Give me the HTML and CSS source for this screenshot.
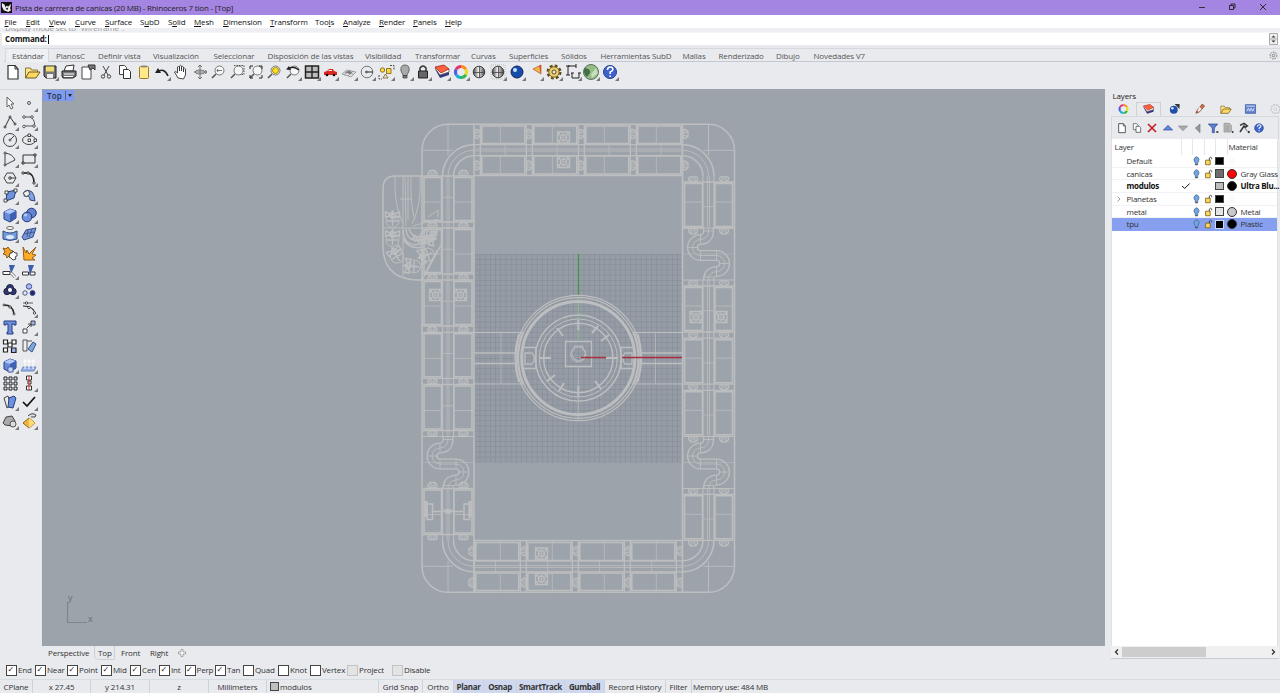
FILE: index.html
```html
<!DOCTYPE html>
<html lang="en">
<head>
<meta charset="utf-8">
<title>Rhinoceros 7</title>
<link rel="stylesheet" href="styles.css">
</head>
<body>
<div class="app">
<header class="titlebar">
  <svg class="logo" viewBox="0 0 12 12"><path d="M0 0h12v12H0z" fill="#111"/><path d="M1 1l3 2 1 3 1-2 2 1 3-3-1 5 1 2-3 2-5-2-2-4z" fill="#eee"/><path d="M5 7l3-1-1 3z" fill="#222"/></svg>
  <span class="title">Pista de carrrera de canicas (20 MB) - Rhinoceros 7 tion - [Top]</span>
  <svg class="winbtns" viewBox="0 0 80 15" fill="none" stroke="#222" stroke-width=".9"><path d="M4 7.500h6M65 4l6 6m0-6l-6 6"/><path d="M34.500 5.500h4v4h-4zM36 5.500V4h4v4h-1.500"/></svg>
</header>
<nav class="menu"><span><u>F</u>ile</span><span><u>E</u>dit</span><span><u>V</u>iew</span><span><u>C</u>urve</span><span><u>S</u>urface</span><span>S<u>u</u>bD</span><span>S<u>o</u>lid</span><span><u>M</u>esh</span><span><u>D</u>imension</span><span><u>T</u>ransform</span><span>Too<u>l</u>s</span><span><u>A</u>nalyze</span><span><u>R</u>ender</span><span><u>P</u>anels</span><span><u>H</u>elp</span></nav>
<div class="history"><span>Display mode set to "Wireframe".</span></div>
<div class="command"><b>Command:</b><i class="caret"></i><svg class="spin" viewBox="0 0 9 12"><path d="M.5.500h8v11h-8zM.500 6h8" fill="#eee" stroke="#aaa"/><path d="M2.500 4.500l2-2 2 2zM2.500 7.500l2 2 2-2z" fill="#333"/></svg></div>
<nav class="tabs"><span class="on">Estándar</span><span>PlanosC</span><span>Definir vista</span><span>Visualización</span><span>Seleccionar</span><span>Disposición de las vistas</span><span>Visibilidad</span><span>Transformar</span><span>Curvas</span><span>Superficies</span><span>Sólidos</span><span>Herramientas SubD</span><span>Mallas</span><span>Renderizado</span><span>Dibujo</span><span>Novedades V7</span><svg class="gear" viewBox="0 0 10 10" fill="none" stroke="#777"><circle cx="5" cy="5" r="3.800" stroke-dasharray="2 .8"/><circle cx="5" cy="5" r="1.500"/></svg></nav>

<div class="toolbar">
  <svg viewBox="0 0 18 18"><use href="#page"/></svg>
  <svg viewBox="0 0 18 18"><use href="#folder"/></svg>
  <svg viewBox="0 0 18 18"><path d="M3 3h12v12H5l-2-2z" fill="#777" stroke="#222"/><path d="M5 3.500h8v5H5z" fill="#f0dc70"/><path d="M6 11h6v4H6z" fill="#eee"/><use href="#tri"/></svg>
  <svg viewBox="0 0 18 18"><path d="M6 3l8-1-1 6H4z" fill="#fff" stroke="#333"/><path d="M2 8h14v5l-3 2H3l-1-2z" fill="#777" stroke="#222"/><path d="M4 11h10M4 13.500h9" stroke="#fff"/></svg>
  <svg viewBox="0 0 18 18"><path d="M3 4h9v12H3z" fill="#fff" stroke="#444"/><path d="M9 2h7v5l-2-2-3 2z" fill="#777" stroke="#333"/></svg>
  <svg viewBox="0 0 18 18" fill="none" stroke="#444"><path d="M6 3l5 9M12 3l-5 9"/><circle cx="6" cy="13.500" r="1.700"/><circle cx="12" cy="13.500" r="1.700"/></svg>
  <svg viewBox="0 0 18 18"><use href="#copy"/></svg>
  <svg viewBox="0 0 18 18"><rect x="4.500" y="3.500" width="9" height="12" rx="1" fill="#ffe98a" stroke="#9a7b22"/><path d="M6.500 2.500h5v2h-5z" fill="#888"/></svg>
  <svg viewBox="0 0 18 18"><path d="M4 9q7-5 11 4" fill="none" stroke="#222" stroke-width="1.600"/><path d="M2 10l3-5 3 5z" fill="#222"/><use href="#tri"/></svg>
  <svg viewBox="0 0 18 18"><path d="M6 15L2.500 9q1-1.500 3 1V4q1-1 2 0v4-5q1-1.500 2 0v5-4q1-1.500 2 0v5-3q1-1.500 2 0v6l-2 4z" fill="#fff" stroke="#333" stroke-width=".9"/></svg>
  <svg viewBox="0 0 18 18" fill="none" stroke="#666" stroke-width=".9"><path d="M9 2v14M3 9h13M7 4l2-2 2 2M7 14l2 2 2-2M14 7l2 2-2 2"/><ellipse cx="9" cy="9" rx="5" ry="2"/></svg>
  <svg viewBox="0 0 18 18"><use href="#lens"/><path d="M8 7.500h5M9 6l-1 1.500L9 9" stroke="#555" fill="none" stroke-width=".8"/></svg>
  <svg viewBox="0 0 18 18"><use href="#lens"/><path d="M6 2.500h10v9h-4" fill="none" stroke="#555" stroke-dasharray="1.500 1"/></svg>
  <svg viewBox="0 0 18 18"><use href="#lens"/><path d="M3 6V3h3M12 3h3v3M15 12v3h-3M3 12v3h3" fill="none" stroke="#222"/></svg>
  <svg viewBox="0 0 18 18"><use href="#lens"/><circle cx="10.500" cy="7.500" r="3" fill="#ffe020" stroke="#a78100"/></svg>
  <svg viewBox="0 0 18 18"><use href="#lens"/><path d="M4 6q5-4 11 1" fill="none" stroke="#222" stroke-width="1.500"/><path d="M2 6.500l3-3.500 2 4z" fill="#222"/><use href="#tri"/></svg>
  <svg viewBox="0 0 18 18"><path d="M2.500 3h13v12h-13z" fill="#bbb" stroke="#222" stroke-width="1.500"/><path d="M9 3v12M2 9h14" stroke="#222" stroke-width="1.400"/><use href="#tri"/></svg>
  <svg viewBox="0 0 18 18"><path d="M3 9l3-1 2-2h4l1 2 3 1v3H3z" fill="#db2922"/><path d="M8 7h3v1H7z" fill="#eee"/><circle cx="6" cy="12" r="1.300"/><circle cx="13" cy="12" r="1.300"/><use href="#tri"/></svg>
  <svg viewBox="0 0 18 18"><path d="M2 11l5-4 9 2-5 5zM5 9l8 2M4 12l6-5M8 13l5-5" fill="#ddd" stroke="#888" stroke-width=".7"/><path d="M5 9l5 2 2-2-3-1z" fill="#777"/><use href="#tri"/></svg>
  <svg viewBox="0 0 18 18" fill="none" stroke="#777"><circle cx="9" cy="9" r="5.800"/><path d="M9 9h6" stroke="#222"/><circle cx="8.500" cy="9" r="1" fill="#222"/><use href="#tri"/></svg>
  <svg viewBox="0 0 18 18" stroke="#735c12" stroke-width=".8" fill="#ffd83b"><circle cx="5.500" cy="7" r="2.200"/><path d="M9.500 5.500h4.500v5H9.500z"/><path d="M6 15l2.500-4 2.500 4z" fill="#eee"/><path d="M13 2.500h4v4M2 12v4h3" fill="none" stroke="#222" stroke-dasharray="2 1"/><use href="#tri"/></svg>
  <svg viewBox="0 0 18 18"><path d="M7 12L5 8q-1-6 4-6t4 6l-2 4v3H7z" fill="#aaa" stroke="#666"/><path d="M7 12.500h4M7 14h4" stroke="#444"/><use href="#tri"/></svg>
  <svg viewBox="0 0 18 18"><path d="M6 9V5q3-4 6 0v4" fill="none" stroke="#333" stroke-width="1.500"/><path d="M4.500 8h9v7h-9z" fill="#666" stroke="#222"/><use href="#tri"/></svg>
  <svg viewBox="0 0 18 18"><use href="#layers"/><use href="#tri"/></svg>
  <svg viewBox="0 0 18 18"><use href="#wheel"/><use href="#tri"/></svg>
  <svg viewBox="0 0 18 18"><use href="#sphere"/></svg>
  <svg viewBox="0 0 18 18"><path d="M2 2h14v14H2z" fill="none" stroke="#bbb" stroke-dasharray="1 1"/><use href="#sphere"/><use href="#tri"/></svg>
  <svg viewBox="0 0 18 18"><circle cx="9" cy="9" r="6" fill="#174ba8" stroke="#102560"/><circle cx="7" cy="7" r="2" fill="#c4e2ff"/><use href="#tri"/></svg>
  <svg viewBox="0 0 18 18"><path d="M7 6l8-4v9z" fill="#f6b44c" stroke="#a75520" stroke-width=".7"/><path d="M13 3l2-1v9z" fill="#d65424"/><use href="#tri"/></svg>
  <svg viewBox="0 0 18 18"><circle cx="9" cy="9" r="6" fill="none" stroke="#604d16" stroke-width="3" stroke-dasharray="2.700 2"/><circle cx="9" cy="9" r="5.200" fill="#e8cd73" stroke="#80691f"/><circle cx="9" cy="9" r="2" fill="#eee" stroke="#604d16"/><use href="#tri"/></svg>
  <svg viewBox="0 0 18 18" fill="none" stroke="#222"><path d="M4 12V3h8M2 3h4M2 12h4M12 1v4M8 10v5h7v-5M7 10h3M14 10h3"/><use href="#tri"/></svg>
  <svg viewBox="0 0 18 18"><circle cx="9" cy="9" r="7.500" fill="#93bd83" stroke="#5f6e62"/><path d="M3 5q6 1 5 5l-3 4Q0 9 3 5" fill="#416d47"/><path d="M9 11l5-6 2 5-6 5z" fill="#c4dfb9"/><use href="#tri"/></svg>
  <svg viewBox="0 0 18 18"><use href="#help"/><use href="#tri"/></svg>
</div>

<main class="work">
<aside class="tools">
  <svg viewBox="0 0 18 18"><path d="M6 3v10l2-2 2 4 2-1-2-4h3z" fill="#fff" stroke="#555" stroke-width=".9"/></svg>
  <svg viewBox="0 0 18 18"><circle cx="9" cy="9" r="1.500" fill="none" stroke="#555"/><use href="#tri"/></svg>
  <svg viewBox="0 0 18 18" fill="none" stroke="#333"><path d="M4 14L9 4l5 7"/><g fill="#fff"><circle cx="4" cy="14" r="1"/><circle cx="9" cy="4" r="1"/><circle cx="14" cy="11" r="1"/></g><use href="#tri"/></svg>
  <svg viewBox="0 0 18 18" fill="none" stroke="#444" stroke-width=".9"><path d="M4 4h7q5 5 3 9H4"/><g fill="#fff"><circle cx="4" cy="4" r="1.300"/><circle cx="12" cy="4" r="1.300"/><circle cx="4" cy="13.500" r="1.300"/><circle cx="14" cy="13" r="1.300"/></g><use href="#tri"/></svg>
  <svg viewBox="0 0 18 18" fill="none" stroke="#444"><circle cx="9" cy="9" r="6.500"/><path d="M9 9l4-4"/><circle cx="9" cy="9" r="1" fill="#fff"/><use href="#tri"/></svg>
  <svg viewBox="0 0 18 18" fill="none" stroke="#444"><ellipse cx="9" cy="9" rx="6.500" ry="4.500"/><path d="M8 8h2.500v2.500H8zM14 8h2.500v2.500H14zM8 3h2.500v2.500H8z" fill="#fff" stroke="#222" stroke-width=".8"/><use href="#tri"/></svg>
  <svg viewBox="0 0 18 18" fill="none" stroke="#444"><path d="M4 3v12l10-5Q12 4 4 3z"/><circle cx="4" cy="3" r="1" fill="#fff"/><circle cx="4" cy="15" r="1" fill="#fff"/><use href="#tri"/></svg>
  <svg viewBox="0 0 18 18" fill="none" stroke="#333"><path d="M3 5h12v8H3z"/><path d="M2 12h2v2H2zM14 4h2v2h-2z" fill="#fff"/><use href="#tri"/></svg>
  <svg viewBox="0 0 18 18" fill="none" stroke="#444"><path d="M6 4h6l3 5-3 5H6L3 9z"/><path d="M9 9h6"/><circle cx="9" cy="9" r="1.300"/><use href="#tri"/></svg>
  <svg viewBox="0 0 18 18" fill="none" stroke="#222"><path d="M3 4h5q6 1 6 10" stroke-width="1.500"/><path d="M2 3h2v2H2zM7 3h2v2H7zM13 13h2v2h-2z" fill="#fff" stroke-width=".8"/><use href="#tri"/></svg>
  <svg viewBox="0 0 18 18"><path d="M6 5l9-2-2 8-8 3z" fill="#6f91da" stroke="#24407d"/><path d="M4 4h3v3H4zM13 2h3v3h-3zM3 12h3v3H3z" fill="#fff" stroke="#222" stroke-width=".8"/><use href="#tri"/></svg>
  <svg viewBox="0 0 18 18"><path d="M5 4q9-3 10 10l-5-1q0-5-6-4z" fill="#86a2e6" stroke="#354675"/><path d="M3 6l5-3 2 4-4 3z" fill="#eee" stroke="#333" stroke-width=".8"/><use href="#tri"/></svg>
  <svg viewBox="0 0 18 18"><use href="#box"/><use href="#tri"/></svg>
  <svg viewBox="0 0 18 18"><circle cx="11.500" cy="7" r="4.800" fill="#6482cf" stroke="#253a79"/><circle cx="7" cy="11" r="4.800" fill="#6f90de" stroke="#253a79"/><circle cx="5.500" cy="9" r="1.600" fill="#b8c9fa"/><use href="#tri"/></svg>
  <svg viewBox="0 0 18 18"><ellipse cx="9" cy="3" rx="3.500" ry="1.500" fill="#fff" stroke="#666"/><path d="M2 6v8q7 3 14 0V6q-7 4-14 0z" fill="#729bd9" stroke="#334b85"/><ellipse cx="9" cy="12" rx="4" ry="2" fill="#e0e8f9"/><use href="#tri"/></svg>
  <svg viewBox="0 0 18 18"><path d="M2 12L6 5l10-2-3 9-9 3z" fill="#7897d8" stroke="#334b85"/><path d="M4 9l10-2M8 5l-1 7M12 4l-3 8" stroke="#334b85" stroke-width=".8"/><use href="#tri"/></svg>
  <svg viewBox="0 0 18 18"><path d="M2 4l3 1 2-2 2 3 3 1-2 3 1 3-3-1-2 2-1-3-3-1 2-2z" fill="#f4a129" stroke="#8b5a0f"/><path d="M9 9h2l1-2 2 2h2v3l-2 1 1 2-3 1-2-2-2-1z" fill="#fff" stroke="#444"/></svg>
  <svg viewBox="0 0 18 18"><path d="M3 3l3 6 1-3 2 4 7-7-4 7 4 1-4 3 3 2H4z" fill="#ffad28" stroke="#985d13"/></svg>
  <svg viewBox="0 0 18 18"><path d="M2 9.500h7v3H2z" fill="#fff" stroke="#333"/><path d="M8 3h6l-4 9z" fill="#3c5eac"/><path d="M10 11l4 4" stroke="#777" stroke-width="3"/><path d="M10 11l4 4" stroke="#fff" stroke-width="1.500"/><use href="#tri"/></svg>
  <svg viewBox="0 0 18 18"><path d="M2.500 10h6v3h-6zM10 10h5v3h-5z" fill="#fff" stroke="#333"/><path d="M8 3h6L10 13z" fill="#3c5eac"/></svg>
  <svg viewBox="0 0 18 18" fill="#303870" stroke="#202040"><circle cx="6" cy="10.500" r="3.200"/><circle cx="12" cy="10.500" r="3.200"/><circle cx="9" cy="7" r="3.500"/><circle cx="9" cy="9" r="2" fill="#fff" stroke="none"/><use href="#tri"/></svg>
  <svg viewBox="0 0 18 18" stroke="#445090"><circle cx="9" cy="5.500" r="2.700" fill="#a9b7f6"/><circle cx="5" cy="12" r="2.200" fill="#eee"/><circle cx="12.500" cy="12" r="2.500" fill="#1c286e"/></svg>
  <svg viewBox="0 0 18 18" fill="none" stroke="#222" stroke-width="1.300"><path d="M3 5q9 0 10 9"/><g fill="#fff" stroke-width=".8"><circle cx="3" cy="5" r="1"/><circle cx="9" cy="7" r="1.200"/><circle cx="13" cy="14" r="1"/></g></svg>
  <svg viewBox="0 0 18 18" fill="none" stroke="#222" stroke-width="1.200"><path d="M3 6q11 0 12 8"/><path d="M3 3h10" stroke-width=".7"/><g fill="#fff" stroke-width=".8"><circle cx="6.500" cy="3" r="1.200"/><circle cx="9" cy="7.500" r="1.200"/><circle cx="14.500" cy="13" r="1.200"/></g><use href="#tri"/></svg>
  <svg viewBox="0 0 18 18"><path d="M3 3h12v4h-2V6h-2v8h1v2H6v-2h1V6H5v1H3z" fill="#718edc" stroke="#243d80"/></svg>
  <svg viewBox="0 0 18 18" fill="#fff" stroke="#444"><path d="M3 11h4v4H3z"/><path d="M11 3h4v4h-4z" fill="#9fb4ee"/><path d="M7 10l4-4M8 6h3v3" fill="none"/><use href="#tri"/></svg>
  <svg viewBox="0 0 18 18" fill="#fff" stroke="#222" stroke-width="1.200"><path d="M2.500 3h4v4h-4zM11 3h4v4h-4zM7 6h4v4H7zM2.500 11h4v4h-4z"/><path d="M10.500 11h4.500v4.500h-4.500z" fill="#9fb4ee"/></svg>
  <svg viewBox="0 0 18 18"><path d="M3 3h4v11H3z" fill="#eee" stroke="#555"/><path d="M8 12l5-7 3 2-4 8z" fill="#82a4df" stroke="#36538b"/><path d="M7 4h5" stroke="#555"/></svg>
  <svg viewBox="0 0 18 18"><use href="#box"/><path d="M7 11h5v5H7z" fill="#c5d4fa" stroke="#465f9c"/><use href="#tri"/></svg>
  <svg viewBox="0 0 18 18"><path d="M3 11h13l-2 4H1z" fill="#94b0ed" stroke="#7089bb"/><path d="M5 13V4M9 13V4M13 13V4M3.500 6L5 3.500 6.500 6M7.500 6L9 3.500l1.500 2.500M11.500 6L13 3.500 14.500 6" stroke="#fff" fill="none"/><use href="#tri"/></svg>
  <svg viewBox="0 0 18 18" fill="#dce4fb" stroke="#222"><path d="M3 3h3v3H3zM8 3h3v3H8zM13 3h3v3h-3zM3 8h3v3H3zM8 8h3v3H8zM13 8h3v3h-3zM3 13h3v3H3zM8 13h3v3H8zM13 13h3v3h-3z"/></svg>
  <svg viewBox="0 0 18 18" fill="#fff" stroke="#333"><path d="M6.500 2h5v4h-5zM8 7h3v3H8zM6.500 12h5v4h-5z"/><path d="M9 2v14" stroke="#d33"/><use href="#tri"/></svg>
  <svg viewBox="0 0 18 18"><path d="M3 5l4-2 3 9-4 3z" fill="#eee" stroke="#444"/><path d="M8 5l5-2 2 2-3 10-5-1z" fill="#6e91dc" stroke="#243d80"/><use href="#tri"/></svg>
  <svg viewBox="0 0 18 18"><path d="M3 9l4 4 8-9" fill="none" stroke="#111" stroke-width="1.700"/><use href="#tri"/></svg>
  <svg viewBox="0 0 18 18"><path d="M2 11l3-6 6-1 3 5-2 5-8-1z" fill="#aaa" stroke="#444"/><circle cx="12" cy="12" r="3" fill="#ddd" stroke="#555"/><use href="#tri"/></svg>
  <svg viewBox="0 0 18 18"><path d="M3 11l6-5 6 5-6 5z" fill="#f2b53b" stroke="#8b671c"/><path d="M9 6v10l6-5z" fill="#ffda76"/><path d="M8 4q4-4 8-1l-1 2h-4" fill="#ddd" stroke="#333" stroke-width=".9"/><use href="#tri"/></svg>
</aside>

<section class="viewport">
<div class="vplabel">Top<i></i></div>
<svg class="scene" viewBox="42 89 1063 557">
  <defs>
    <pattern id="minor" x="474.300" y="253.900" width="5.200" height="5.200" patternUnits="userSpaceOnUse"><path d="M0 0V5.200M0 0H5.200" stroke="#7f8790" stroke-width=".9"/></pattern>
    <g id="clip"><path d="M-4.500 1.500q0-3 2-3v-1h5v1q2 0 2 3l-1 1h-7z" stroke-width="1.300"/><path d="M-3 .5h6M-1.500-2v4M1.500-2v4" stroke-width=".7"/></g>
    <g id="mod"><path d="M2 1.500h17.500v43H2zM32 1.500h18v43H32z" stroke-width="1.600"/><path d="M20.600 0v52M31.600 0v52" stroke-width="1.100"/><path d="M25 0v52M27 0v52M0 26h20M32 26h20M20 21.300h11" stroke-width=".8"/><path d="M0 0h52M0 46h52" stroke-width="1.300"/></g>
    <g id="snake"><path d="M26 0v3q0 8-8 8.500a8 8 0 0 0 0 16h16a8 8 0 0 1 0 16q-8 .5-8 8.500" stroke-width="11.200"/><path d="M26-1v4q0 8-8 8.500a8 8 0 0 0 0 16h16a8 8 0 0 1 0 16q-8 .5-8 9.500" stroke="#9ca3ab" stroke-width="8.400"/><path d="M26 0v3q0 8-8 8.500a8 8 0 0 0 0 16h16a8 8 0 0 1 0 16q-8 .5-8 8.500M6 19.500h9M18 7v9M18 23v10M34 22v10M37 35.500h9M34 39v9M21 3h10M21 49h10" stroke-width=".9"/><path d="M0 0h52M0 52h52" stroke-width="1.200"/><path d="M0 26h52" stroke-width=".5"/></g>
    <g id="target"><path d="M-6-5.500h12v11H-6zM-6-3h2v-2.500M6-3H4v-2.500M-6 3h2v2.500M6 3H4v2.500" stroke-width="1.300"/><circle r="3" stroke-width="1.400"/><path d="M-4 0h8M0-4v8" stroke-width=".7"/></g>
    <g id="corner"><path d="M0 52V26A26 26 0 0 1 26 0H52" stroke-width="1.500"/><path d="M20.500 52A31.500 31.500 0 0 1 52 20.500M31.500 52A20.500 20.500 0 0 1 52 31.500" stroke-width="1.600"/><path d="M26 52A26 26 0 0 1 52 26M26 0v31M0 26h31" stroke-width=".9"/></g>
    <g id="fish"><circle cy="4" r="6.500"/><path d="M-7-5l5 2 2-3 2 3 5-2v5l-4-1-3 3-3-3-4 1zM-4-2l8 3M0-5v14M-6 4H6" stroke-width="1.400"/></g>
  </defs>
  <rect x="474" y="254" width="208.500" height="208.500" fill="#959ca5"/>
  <rect x="474" y="254" width="208.500" height="208.500" fill="url(#minor)"/>
  <path d="M578.500 254v41" stroke="#3c993f" stroke-width="1.200"/><path d="M578.500 296v44" stroke="#82bd82"/>
  <g class="wire">
    <use href="#corner" x="422" y="124.300"/>
    <use href="#corner" transform="translate(734.500 124.300) scale(-1 1)"/>
    <use href="#corner" transform="translate(422 592.300) scale(1 -1)"/>
    <use href="#corner" transform="translate(734.500 592.300) scale(-1 -1)"/>
    <path d="M474 124.300H683M422 176v364M734.500 176v364M474 592.300H683" stroke-width="1.500"/>
    <path d="M474 175.500H683M474 540.500H683M474 124v468M682.500 124v468" stroke-width="1.600"/>
    <g><use href="#mod" x="422" y="176"/><use href="#mod" x="422" y="228"/><use href="#mod" x="422" y="280"/><use href="#mod" x="422" y="332.300"/><use href="#mod" x="422" y="384.500"/><use href="#snake" x="422" y="436.500"/><use href="#mod" x="422" y="488.500"/></g>
    <g><use href="#mod" transform="translate(734.500 228) rotate(180)"/><use href="#snake" x="682.500" y="228"/><use href="#mod" transform="translate(734.500 332) rotate(180)"/><use href="#mod" transform="translate(734.500 384.200) rotate(180)"/><use href="#mod" transform="translate(734.500 436.300) rotate(180)"/><use href="#snake" x="682.500" y="436.500"/><use href="#mod" transform="translate(734.500 540.300) rotate(180)"/></g>
    <g><use href="#mod" transform="matrix(0 1 -1 0 526.300 124)"/><use href="#mod" transform="matrix(0 1 -1 0 578.300 124)"/><use href="#mod" transform="matrix(0 1 -1 0 630.300 124)"/><use href="#mod" transform="matrix(0 1 -1 0 682.300 124)"/></g>
    <g><use href="#mod" transform="matrix(0 -1 1 0 474.300 592.500)"/><use href="#mod" transform="matrix(0 -1 1 0 526.300 592.500)"/><use href="#mod" transform="matrix(0 -1 1 0 578.300 592.500)"/><use href="#mod" transform="matrix(0 -1 1 0 630.300 592.500)"/></g>
    <g id="leftclips"><use href="#clip" x="432.500" y="173"/><use href="#clip" x="463.500" y="173"/><use href="#clip" x="432.500" y="225"/><use href="#clip" x="463.500" y="225"/><use href="#clip" x="432.500" y="277"/><use href="#clip" x="463.500" y="277"/><use href="#clip" x="432.500" y="329"/><use href="#clip" x="463.500" y="329"/><use href="#clip" x="432.500" y="381"/><use href="#clip" x="463.500" y="381"/><use href="#clip" x="432.500" y="433"/><use href="#clip" x="463.500" y="433"/><use href="#clip" x="432.500" y="485"/><use href="#clip" x="463.500" y="485"/><use href="#clip" x="432.500" y="537"/><use href="#clip" x="463.500" y="537"/></g>
    <use href="#leftclips" transform="rotate(180 578.300 358.200)"/>
    <g id="topclips"><use href="#clip" transform="translate(477.500 134) rotate(90)"/><use href="#clip" transform="translate(477.500 165.500) rotate(90)"/><use href="#clip" transform="translate(529.500 134) rotate(90)"/><use href="#clip" transform="translate(529.500 165.500) rotate(90)"/><use href="#clip" transform="translate(581.500 134) rotate(90)"/><use href="#clip" transform="translate(581.500 165.500) rotate(90)"/><use href="#clip" transform="translate(633.500 134) rotate(90)"/><use href="#clip" transform="translate(633.500 165.500) rotate(90)"/><use href="#clip" transform="translate(685.500 134) rotate(90)"/><use href="#clip" transform="translate(685.500 165.500) rotate(90)"/></g>
    <use href="#topclips" transform="rotate(180 578.500 358.300)"/>
    <use href="#target" x="563.500" y="137.500"/><use href="#target" x="563.500" y="162"/><use href="#target" x="541.500" y="553.500"/><use href="#target" x="541.500" y="579"/><use href="#target" x="435.500" y="295"/><use href="#target" x="460.500" y="295"/><use href="#target" x="696" y="317"/><use href="#target" x="721" y="317"/>
    <path d="M433 511.500h30M427 504h5.500v15.500H427zM464 504h5.500v15.500H464zM446 510h4v3h-4z" stroke-width="1.500"/><path d="M426 501v16M470 501v16" stroke-width="3"/>
    <!-- marble funnel -->
    <path d="M422 176h-27q-12 0-12 13v57q0 33 35 34h4l19-35" stroke-width="1.500"/>
    <path d="M395 176q-1 28 7 46M403 176v100M405 176l1 50M408 176v44M411 176q-1 30 4 44M420 176q2 28-8 48M400 199h12M383 228h39M428 217l10-7v7M424 275l13-25M413 226l25-7" stroke-width="1"/>
    <use href="#fish" x="392.500" y="217"/><use href="#fish" x="392.500" y="236"/><use href="#fish" transform="translate(395 253) rotate(-30)"/><use href="#fish" transform="translate(410 266) rotate(-85)"/><use href="#fish" transform="translate(424 256) rotate(-110)"/><use href="#fish" transform="translate(430 238) rotate(100)"/>
    <path d="M403 230q1 18 17 14t17-10M406 229q1 13 14 11t18-9M409 229q3 9 13 8t15-8M403 239q7 11 19 8" stroke-width="1.500"/>
    <path d="M413 237q7 8 21 0" stroke-width="5" stroke-dasharray="2 1"/>
    <!-- dial and its arms -->
    <path d="M474 332.500h50M474 384h50M633 332.500h49M633 384h49" stroke-width="1.200"/><path d="M474 353h42M474 363.500h42M642 353h40M642 363.500h40" stroke-width="1.500"/><path d="M501 333v51M655.500 333v51" stroke-width=".7"/>
    <circle cx="578.300" cy="358" r="62.700" stroke-width="1.300"/><circle cx="578.300" cy="358" r="60.300" stroke-width="1.200"/><circle cx="578.300" cy="358" r="56.600" stroke-width="3"/>
    <circle cx="578.300" cy="358" r="43" stroke-width="1.500"/><circle cx="578.300" cy="358" r="39"/><circle cx="578.300" cy="358" r="34.700" stroke-width="1.500"/>
    <path d="M523 332q-10 26 0 52M519 334q-7 24 0 48M633.600 332q10 26 0 52M637.600 334q7 24 0 48" stroke-width="2.200"/>
    <path d="M522 347.500h14v21h-14M525 353h7l2 3v5l-2 3h-7zM635 347.500h-14v21h14M632 353h-7l-2 3v5l2 3h7z" stroke-width="1.300"/>
    <path d="M565.500 341.500h26v25h-26z" stroke-width="1.300"/><circle cx="578.300" cy="354.500" r="7.500"/><path d="M574 349v-3h9v3l2.500 4-2.500 6-4.500 2-4.500-2-2.500-6z"/>
    <path d="M578.300 320v10M578.300 386v11M540 358h11M606 358h12M557 328l6 8M598 326l-6 7M609 335l-8 6M547 381l8-6M559 391l5-8M601 389l-6-8" stroke-width="2"/>
    <path d="M578.300 366v54" stroke-width=".8"/>
  </g>
  <path d="M581 357.500h25M622 357.500h60" stroke="#ac2f3d" stroke-width="1.400"/>
  <path d="M67.500 602v20.500H87" fill="none" stroke="#7e858d" stroke-width="1.200"/>
  <text x="68" y="601" class="axis">y</text><text x="88" y="622" class="axis">x</text>
</svg>
</section>

<aside class="panel">
  <div class="ptitle">Layers</div>
  <div class="ptabs">
    <svg viewBox="0 0 18 18"><use href="#wheel"/></svg>
    <svg class="on" viewBox="0 0 18 18"><use href="#layers"/></svg>
    <svg viewBox="0 0 18 18"><circle cx="8" cy="10" r="5.500" fill="#204fa8"/><path d="M9 2h7v7l-3-3z" fill="#333"/><circle cx="6" cy="8" r="1.800" fill="#d3e8ff"/></svg>
    <svg viewBox="0 0 18 18"><path d="M4 15l2-5 7-8 3 3-7 8z" fill="#cf6d47" stroke="#72402d"/><path d="M9 6l3 3-4 4-2-2z" fill="#eee"/></svg>
    <svg viewBox="0 0 18 18"><use href="#folder"/></svg>
    <svg viewBox="0 0 18 18"><path d="M2 3h14v12H2z" fill="#6384d3" stroke="#39549a"/><path d="M3 5h12" stroke="#fff"/><path d="M4 12l2-4 2 4 2-4 2 4 2-4" fill="none" stroke="#fff"/></svg>
    <svg viewBox="0 0 18 18" fill="none" stroke="#c3c8ce"><circle cx="9" cy="9" r="6" stroke-width="2" stroke-dasharray="3 1"/><circle cx="9" cy="9" r="2"/></svg>
  </div>
  <div class="ptools">
    <svg viewBox="0 0 18 18"><use href="#page"/></svg>
    <svg viewBox="0 0 18 18"><use href="#copy"/></svg>
    <svg viewBox="0 0 18 18"><path d="M3 3l12 12M15 3L3 15" stroke="#c5202a" stroke-width="2.600"/></svg>
    <svg viewBox="0 0 18 18"><path d="M2 12l7-7 7 7z" fill="#6585dd" stroke="#334a9c"/></svg>
    <svg viewBox="0 0 18 18"><path d="M2 6l7 7 7-7z" fill="#aaa" stroke="#888"/></svg>
    <svg viewBox="0 0 18 18"><path d="M12 3L5 9l7 7z" fill="#999" stroke="#777"/></svg>
    <svg viewBox="0 0 18 18"><path d="M2 3h14l-5 6v7H8V9z" fill="#5d7fd4" stroke="#293f85"/><path d="M14 14h3v2h-3z"/></svg>
    <svg viewBox="0 0 18 18"><path d="M3 2h8l3 3v10H3zM5 6h6M5 9h6M5 12h6" fill="#bbb" stroke="#888"/><path d="M15 14h2v2h-2z"/></svg>
    <svg viewBox="0 0 18 18"><path d="M3 5l6-3 5 4-3 2-2-2-6 9" fill="none" stroke="#333" stroke-width="2.200"/><path d="M9 7l5 7M15 14h2v2h-2z" stroke="#333"/></svg>
    <svg viewBox="0 0 18 18"><use href="#help"/></svg>
  </div>
  <div class="tree">
    <div class="row head"><span></span><span class="nm">Layer</span><span></span><span></span><span></span><span></span><span></span><span class="mat">Material</span></div>
    <div class="row"><span></span><span>Default</span><span></span><svg viewBox="0 0 10 12"><use href="#bulb"/></svg><svg viewBox="0 0 10 12"><use href="#unlock"/></svg><i class="sw black"></i><i class="ball none"></i><span></span></div>
    <div class="row"><span></span><span>canicas</span><span></span><svg viewBox="0 0 10 12"><use href="#bulb"/></svg><svg viewBox="0 0 10 12"><use href="#unlock"/></svg><i class="sw dark"></i><i class="ball red"></i><span>Gray Glass</span></div>
    <div class="row bold"><span></span><span>modulos</span><svg viewBox="0 0 10 12"><path d="M1 6l3 3 6-6" fill="none" stroke="#111" stroke-width="1.200"/></svg><span></span><span></span><i class="sw gray"></i><i class="ball"></i><span>Ultra Blu...</span></div>
    <div class="row"><svg viewBox="0 0 10 12"><path d="M5 3l3 3-3 3" fill="none" stroke="#888"/></svg><span>Planetas</span><span></span><svg viewBox="0 0 10 12"><use href="#bulb"/></svg><svg viewBox="0 0 10 12"><use href="#unlock"/></svg><i class="sw black"></i><i class="ball none"></i><span></span></div>
    <div class="row"><span></span><span>metal</span><span></span><svg viewBox="0 0 10 12"><use href="#bulb"/></svg><svg viewBox="0 0 10 12"><use href="#unlock"/></svg><i class="sw light"></i><i class="ball silver"></i><span>Metal</span></div>
    <div class="row sel"><span></span><span>tpu</span><span></span><svg viewBox="0 0 10 12"><use href="#bulb"/></svg><svg viewBox="0 0 10 12"><use href="#unlock"/></svg><i class="sw black edge"></i><i class="ball"></i><span>Plastic</span></div>
  </div>
  <div class="scroll"><svg viewBox="0 0 10 10"><path d="M6.500 2.500L4 5l2.500 2.500" fill="none" stroke="#333" stroke-width="1.300"/></svg><i></i><svg viewBox="0 0 10 10"><path d="M3.500 2.500L6 5 3.500 7.500" fill="none" stroke="#333" stroke-width="1.300"/></svg></div>
</aside>
</main>

<nav class="views"><span>Perspective</span><span class="on">Top</span><span>Front</span><span>Right</span><svg viewBox="0 0 8 8"><path d="M3 .500h2V3h2.500v2H5v2.500H3V5H.5V3H3z" fill="#fff" stroke="#888" stroke-width=".7"/></svg></nav>
<div class="osnap"><label class="c">End</label><label class="c">Near</label><label class="c">Point</label><label class="c">Mid</label><label class="c">Cen</label><label class="c">Int</label><label class="c">Perp</label><label class="c">Tan</label><label>Quad</label><label>Knot</label><label>Vertex</label><label class="off">Project</label><label class="off">Disable</label></div>
<footer class="status"><span>CPlane</span><span>x 27.45</span><span>y 214.31</span><span>z</span><span>Millimeters</span><span class="layer"><i></i>modulos</span><span>Grid Snap</span><span>Ortho</span><span class="act">Planar</span><span class="act">Osnap</span><span class="act">SmartTrack</span><span class="act">Gumball</span><span>Record History</span><span>Filter</span><span class="mem">Memory use: 484 MB</span></footer>
</div>

<svg class="library" width="0" height="0">
  <linearGradient id="gs"><stop offset="0" stop-color="#444"/><stop offset=".45" stop-color="#eee"/><stop offset="1" stop-color="#444"/></linearGradient>
  <symbol id="tri" viewBox="0 0 18 18"><path d="M18 14v4h-4z" fill="#777" stroke="none"/></symbol>
  <symbol id="page" viewBox="0 0 18 18"><path d="M4 2.500h7L14 6v10H4z" fill="#fff" stroke="#333" stroke-width="1.200"/><path d="M11 2.500V6h3" fill="none" stroke="#333"/></symbol>
  <symbol id="folder" viewBox="0 0 18 18"><path d="M2.500 15V5h5l1 2h6v2" fill="#ffe48a" stroke="#8b7732"/><path d="M2.500 15L6 9h11l-4 6z" fill="#ffd95c" stroke="#6b5722"/></symbol>
  <symbol id="copy" viewBox="0 0 18 18"><path d="M3.500 2.500h5l2 2v7h-7z" fill="#fff" stroke="#444"/><path d="M7.500 6.500h5l2 2v7h-7z" fill="#fff" stroke="#333"/></symbol>
  <symbol id="lens" viewBox="0 0 18 18"><circle cx="10.500" cy="7.500" r="4.500" fill="#f6f6f6" stroke="#777"/><path d="M7 11l-4 4" stroke="#555" stroke-width="1.600"/></symbol>
  <symbol id="layers" viewBox="0 0 18 18"><path d="M2 6l5 9 9-3V7l-8 3z" fill="#333b80"/><path d="M2 5l5 7 9-3V6z" fill="#fff" stroke="#634040" stroke-width=".7"/><path d="M2 4l9-2 5 4-8 4z" fill="#ff603d" stroke="#a22a1b" stroke-width=".8"/></symbol>
  <symbol id="wheel" viewBox="0 0 18 18" fill="none" stroke-width="3"><path d="M9 3.500a5.500 5.500 0 0 1 4.800 2.800" stroke="#ff8b17"/><path d="M13.800 6.300a5.500 5.500 0 0 1 0 5.400" stroke="#e9dc21"/><path d="M13.800 11.700A5.500 5.500 0 0 1 9 14.500" stroke="#35b849"/><path d="M9 14.500a5.500 5.500 0 0 1-4.800-2.800" stroke="#1aaed5"/><path d="M4.200 11.700a5.500 5.500 0 0 1 0-5.400" stroke="#525ce0"/><path d="M4.200 6.300A5.500 5.500 0 0 1 9 3.500" stroke="#e33270"/></symbol>
  <symbol id="sphere" viewBox="0 0 18 18"><circle cx="9" cy="9" r="5.800" fill="url(#gs)" stroke="#444"/><path d="M3 9.500h12M9.500 3v12" stroke="#444" stroke-width=".8"/></symbol>
  <symbol id="help" viewBox="0 0 18 18"><circle cx="9" cy="9" r="6.500" fill="#3e62cc" stroke="#253f96"/><path d="M6.500 7q0-3 2.700-3t2.600 2.500Q11.800 8 9.200 9v2M9.200 12.500v1.500" fill="none" stroke="#fff" stroke-width="1.600"/></symbol>
  <symbol id="box" viewBox="0 0 18 18"><path d="M3 6l6-3 6 2v7l-6 4-6-3z" fill="#688bd9" stroke="#233d80"/><path d="M3 6l6 2 6-3-6-2z" fill="#b2c7fa"/><path d="M9 8v8l6-4V5z" fill="#3d60b2"/></symbol>
  <symbol id="bulb" viewBox="0 0 10 12"><path d="M3.500 8Q1.500 6 2 4q1-3 3-3t3 3q0 2-1.500 4v2h-3z" fill="#70a5e5" stroke="#41617f" stroke-width=".8"/><path d="M3.500 10.500h3" stroke="#333"/></symbol>
  <symbol id="unlock" viewBox="0 0 10 12"><path d="M1.500 5h5.500v5.500H1.500z" fill="#ffd95d" stroke="#7f6116"/><path d="M6 5V2.500q1.500-2 3 0V4" fill="none" stroke="#333"/></symbol>
</svg>
</body>
</html>
```
FILE: styles.css
```css
* { box-sizing: border-box; }
body { margin: 0; background: #e9eaee; font: 8px/10px "Open Sans", "Noto Sans", sans-serif; letter-spacing: -.15px; color: #222; white-space: nowrap; overflow: hidden; }
svg { display: block; flex: none; overflow: visible; }
.app { width: 1280px; height: 693px; display: flex; flex-direction: column; }
.library { position: absolute; }
u { text-decoration-thickness: .7px; text-underline-offset: 1px; }

.titlebar { height: 15px; background: #a585e2; display: flex; align-items: center; padding-left: 1px; }
.logo { width: 11px; height: 11px; margin-right: 3px; }
.title { flex: 1; letter-spacing: -.2px; }
.winbtns { width: 80px; height: 15px; margin-right: 5px; }

.menu { height: 13px; background: #fff; display: grid; align-items: center; padding-left: 4.500px; color: #111;
  grid-template-columns: 21.500px 23px 26px 30px 35px 28px 26px 29px 47px 45px 28px 36px 34px 32px 30px; }
.history { height: 5px; background: #eeeff2; overflow: hidden; border-bottom: 1px solid #f6f6f8; display: flex; align-items: flex-end; padding-left: 5px; color: #999; }
.history span { line-height: 8px; }
.command { height: 12px; background: #fff; margin: 0 0 3px 2px; padding: 0 2px 0 3px; display: flex; align-items: center; }
.command b { color: #111; letter-spacing: -.2px; }
.caret { width: 1px; height: 9px; background: #111; margin-left: 1.500px; flex: none; }
.spin { width: 9px; height: 12px; margin-left: auto; }

.tabs { height: 14px; border-top: 1px solid #d5d9df; border-bottom: 1px solid #c3c9d4; margin-left: 4px; padding: 0 1px 0 3px; display: grid; align-items: center; color: #555;
  grid-template-columns: 49px 42px 55px 60.500px 54px 97.500px 50px 56px 38px 52px 39.500px 82px 36px 57.500px 37.500px 1fr 10px; }
.tabs span { height: 13px; line-height: 14px; }
.tabs .on { width: 44px; margin-left: -2px; padding-left: 6px; border: 1px solid #d3d6dc; border-width: 0 1px 0 1px; border-radius: 4px 0 0 0; background: #eeeff3; }
.gear { width: 9px; height: 9px; }

.toolbar { height: 27px; padding: 1px 0 0 4px; display: grid; grid-template-columns: repeat(33, 18.670px); }
.toolbar svg { width: 18px; height: 18px; }

.work { height: 557px; display: flex; }
.tools { width: 42px; padding: 4px 0 0 1px; display: grid; grid-template-columns: 18.700px 18.700px; grid-auto-rows: 18.700px; border-top: 1px solid #d5d9df; }
.tools svg { width: 18px; height: 18px; }
.viewport { width: 1063px; height: 557px; position: relative; background: #9ca3ab; border-left: 1px solid #969da5; }
.scene { width: 1063px; height: 557px; margin-left: -1px; }
.wire { fill: none; stroke: #bdbebf; stroke-width: 1; }
.axis { font: 9px "Open Sans", sans-serif; fill: #666d75; }
.vplabel { position: absolute; left: 0; top: 1px; width: 31px; height: 11px; background: #809bee; padding-left: 4px; line-height: 11px; font-weight: 600; color: #26334f; letter-spacing: .2px; display: flex; align-items: center; }
.vplabel i { border-left: 1px solid #53668f; height: 9px; margin-left: auto; padding: 3px 2px 0; }
.vplabel i::after { content: ""; display: block; border: 2px solid transparent; border-top: 3px solid #222; }

.panel { width: 168px; margin-left: 6px; height: 570px; display: flex; flex-direction: column; border-bottom: 1px solid #c8ccd2; }
.ptitle { height: 13px; padding: 2px 0 0 1.500px; }
.ptabs { height: 14px; display: grid; grid-template-columns: repeat(7, 25.400px); width: 169px; }
.ptabs svg { width: 25px; height: 14px; padding: .5px 0; }
.ptabs svg.on { border: 1px solid #cdd1d8; border-bottom: 0; padding: 0; }
.ptools { height: 23px; border: 1px solid #d5d9df; border-bottom: 0; padding: 5px 0 0 4px; display: grid; grid-template-columns: repeat(10, 15.200px); }
.ptools svg { width: 12px; height: 12px; }
.tree { height: 507px; background: #fff; border: 1px solid #dfe2e7; border-width: 0 1px; margin-right: 1px; }
.row { display: grid; grid-template-columns: 14px 54px 11.500px 11.500px 11px 12px 14px 1fr; height: 12.700px; align-items: center; border-bottom: 1px solid #f2f2f4; padding-left: .5px; color: #333; letter-spacing: -.22px; }
.row svg { width: 9px; height: 10px; }
.row.head { height: 16px; border: 0; }
.nm { margin-left: -12px; }
.mat { margin-left: -12px; }
.row.head span:nth-child(n+3):nth-child(-n+7) { border-left: 1px solid #e4e7ec; height: 16px; }
.row.bold { font-weight: 700; color: #111; letter-spacing: -.3px; }
.row.sel { background: #869fee; border-color: #869fee; }
.sw { width: 9px; height: 8.500px; border: 1px solid #444; }
.black { background: #000; } .dark { background: #6d6d6d; } .gray { background: #bebebe; } .light { background: #e4e4e4; }
.edge { border-color: #ccd6f8; }
.ball { width: 10px; height: 10px; border-radius: 50%; background: #000; border: 1px solid #333; }
.red { background: #fc0505; } .silver { background: #c9c9c9; } .ball.none { background: #fafafa; border-color: #fafafa; transform: scale(.7); }
.scroll { height: 12px; background: #f0f0f0; display: flex; align-items: center; }
.scroll svg { width: 11px; height: 10px; }
.scroll i { width: 84px; height: 10px; background: #cdcdcd; margin-right: auto; }

.views { height: 14px; padding-left: 48px; display: grid; grid-template-columns: 46px 27px 29px 28px 10px; align-items: center; width: 1100px; color: #333; }
.views .on { border: 1px solid #ccd0d6; border-top: 0; border-radius: 0 0 2px 5px; margin-right: 6px; padding-left: 3px; height: 14px; line-height: 14px; }
.views svg { width: 8px; height: 8px; }
.osnap { height: 19px; width: 1100px; padding: 1px 0 0 6px; display: grid; align-items: center; color: #333;
  grid-template-columns: 29px 32px 34px 29px 29px 25.500px 30.500px 28px 35px 32px 37px 45px 50px; }
label { display: flex; align-items: center; }
label::before { content: ""; width: 9px; height: 9px; border: 1px solid #444; background: #fff; margin-right: 1px; flex: none; }
label.c::before { content: "✓"; font: 700 8px/7px "DejaVu Sans", sans-serif; letter-spacing: 0; color: #222; text-indent: .5px; overflow: hidden; }
label.off::before { background: #e3e3e3; border-color: #c3c3c3; }
.status { height: 14px; border-top: 1px solid #d5dce2; display: grid; color: #333;
  grid-template-columns: 33px 58px 59px 59px 58px 112px 44px 31px 30px 33px 48px 40px 61px 26px 1fr; }
.status span { border-right: 1px solid #cbd3dc; text-align: center; line-height: 13px; }
.status .layer { display: flex; align-items: center; padding-left: 3px; }
.layer i { width: 9px; height: 9px; border: 1px solid #444; background: #bfbfbf; margin-right: 1px; }
.status .act { background: #cfd8ee; font-weight: 700; letter-spacing: -.35px; }
.status .mem { text-align: left; padding-left: 1px; border: 0; letter-spacing: -.22px; }
```
